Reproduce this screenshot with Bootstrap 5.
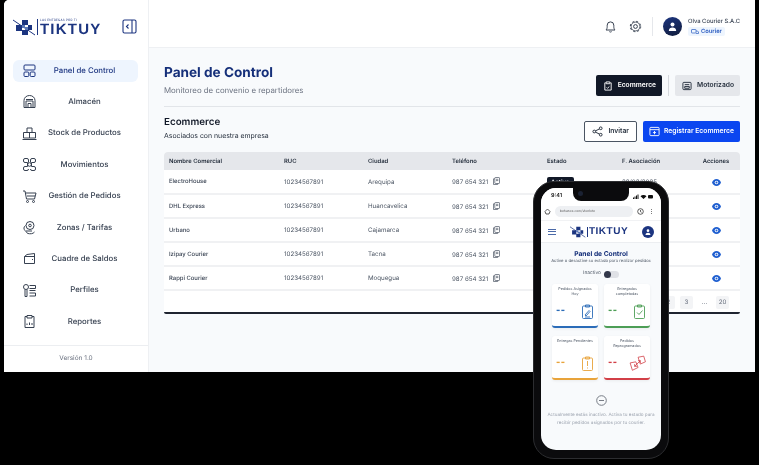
<!DOCTYPE html>
<html lang="es">
<head>
    <meta charset="UTF-8">
    <meta name="viewport" content="width=device-width, initial-scale=1.0">
    <title>Panel de Control</title>
    <link href="https://cdn.jsdelivr.net/npm/bootstrap@5.3.0/dist/css/bootstrap.min.css" rel="stylesheet">
    <style>
        html, body { height: 100%; }
        body { background: #000; font-family: Inter, "Liberation Sans", sans-serif; overflow: hidden; position: relative; text-rendering: geometricPrecision; }

        /* app window */
        .app-frame { margin-left: 4px; width: 751px; height: 372px; background: #f8fafc; overflow: hidden; border-top-left-radius: 5px; will-change: transform; }
        .side-bar { width: 145px; flex: none; background: #fff; border-right: 1px solid #eef0f3; }
        .side-head { height: 48px; padding: 19px 0 0 9px; }
        .logo-mark { width: 23px; height: 17px; flex: none; }
        .logo-sep { width: 1px; height: 16px; background: #1c3580; margin: 0 2px 0 1px; }
        .logo-small { font-size: 3px; line-height: 3px; color: #1c3580; letter-spacing: .2px; }
        .logo-word { font-size: 15px; line-height: 16px; font-weight: 700; color: #1c3580; letter-spacing: 1.2px; font-family: "Liberation Sans", sans-serif; }
        .collapse-ico { width: 15px; height: 15px; margin-left: auto; margin-right: 11px; color: #1c3580; flex: none; }
        .side-nav { margin: 11.5px 10px 0 9px; gap: 9.4px; flex: 1; }
        .side-link { height: 22px; border-radius: 6px; color: #374151; font-size: 7.8px; font-weight: 500; padding-left: 9px; white-space: nowrap; }
        .side-link.is-on { background: #eef5fe; color: #1c3580; }
        .side-link svg { width: 15px; height: 15px; flex: none; fill: none; stroke: currentColor; stroke-width: 1; }
        .side-link span { flex: 1; text-align: center; padding-right: 6px; }
        .side-foot { height: 27px; border-top: 1px solid #eceef1; font-size: 6.5px; color: #6b7280; }

        .top-bar { height: 48px; background: #fff; border-bottom: 1px solid #eef0f3; padding: 6px 15px 0 0; }
        .top-ico { width: 13px; height: 13px; fill: none; stroke: #374151; stroke-width: 1; }
        .top-sep { width: 1px; height: 19px; background: #e5e7eb; margin: 0 10px; }
        .user-pic { width: 19px; height: 19px; background: linear-gradient(160deg, #1c3580, #111c3a); }
        .user-info { margin-left: 6px; }
        .user-name { font-size: 5.85px; line-height: 9px; color: #374151; font-weight: 500; white-space: nowrap; }
        .user-tag { width: fit-content; gap: 2px; font-size: 5.8px; line-height: 9px; font-weight: 600; background: #eef5fe; color: #2a5bc0; padding: 0 3px; border-radius: 2px; margin-top: 1px; }

        /* content */
        .page-body { padding: 16px 15px 0 15px; min-width: 0; }
        .page-title { font-size: 13.6px; line-height: 18px; font-weight: 700; color: #16307a; margin: 0; }
        .page-sub { font-size: 7.85px; line-height: 12px; color: #6b7280; margin: 2px 0 0; }
        .head-actions { margin-top: 11px; }
        .head-btn { height: 21px; gap: 5px; font-size: 6.7px; font-weight: 600; border-radius: 2px; padding: 0 6px 0 7px; border: 0; white-space: nowrap; }
        .head-btn svg { width: 10px; height: 10px; fill: none; stroke: currentColor; stroke-width: 1; }
        .btn-dark-ink { background: #111827; color: #fff; }
        .btn-soft { background: #e5e7eb; color: #1f2937; }
        .head-sep { width: 1px; height: 21px; background: #d5d8dd; margin: 0 6px; }
        .page-rule { border-top: 1px solid #e2e5e9; margin: 10px 0 9px; }
        .section-title { font-size: 9.8px; line-height: 14px; font-weight: 600; color: #111827; margin: 0; }
        .section-sub { font-size: 6.9px; line-height: 10px; color: #1f2937; margin: 1px 0 0; }
        .act-row { margin-top: 5px; gap: 6px; }
        .act-btn { height: 21px; gap: 5px; font-size: 6.75px; font-weight: 600; border-radius: 2px; padding: 0 7px; white-space: nowrap; }
        .act-btn svg { width: 11px; height: 11px; fill: none; stroke: currentColor; stroke-width: 1; }
        .btn-line { background: #fff; border: 1px solid #4b5563; color: #1f2937; }
        .btn-azure { background: #0b46f0; border: 0; color: #fff; gap: 4px; padding: 0 6px; }

        .grid-box { margin-top: 10px; background: #fff; border-radius: 4px 4px 2px 2px; border-bottom: 2px solid #1f2430; overflow: hidden; height: 162px; }
        .grid-table { table-layout: fixed; margin: 0; font-size: 6.2px; color: #4b5563; }
        .grid-table th { background: #e5e7eb; color: #1f2937; font-size: 5.9px; font-weight: 600; height: 18px; padding: 2px 5px 0; vertical-align: middle; border: 0; }
        .grid-table td { height: 24px; padding: 2px 5px 0; vertical-align: middle; border-bottom: 2px solid #f0f1f3; color: #4b5563; }
        .grid-table td:first-child { color: #374151; font-size: 5.9px; font-weight: 500; }
        .w-a { width: 115px; } .w-b { width: 84px; } .w-c { width: 95px; } .w-d { width: 75px; } .w-e { width: 48px; }
        .copy-ico { width: 7px; height: 8px; fill: none; stroke: #4b5563; stroke-width: .7; margin-left: 3px; vertical-align: -1px; }
        .eye-ico { width: 9px; height: 7px; }
        .state-pill { background: #111827; color: #fff; font-size: 6px; font-weight: 600; padding: 2px 4px; border-radius: 2px; }
        .pager-row { height: 23px; padding-right: 11px; gap: 5px; font-size: 6.2px; color: #6b7280; }
        .pager-cell { min-width: 13px; height: 13px; background: #f3f4f6; border-radius: 2px; }
        .pager-gap { background: transparent; }

        /* phone lies over the window */
        .phone { position: absolute; left: 533px; top: 181px; width: 136px; height: 278px; background: #0b0b0d; border: 1px solid #2c2d30; border-radius: 21px; padding: 6px 7px 8px; will-change: transform; }
        .phone-screen { height: 100%; background: #f8fafc; border-radius: 15px; overflow: hidden; position: relative; }
        .notch { position: absolute; left: 32px; top: 0; width: 56px; height: 13px; background: #0b0b0d; border-radius: 0 0 8px 8px; }
        .notch i { position: absolute; left: 5px; top: 3px; width: 5px; height: 5px; border-radius: 50%; background: #1b2233; }
        .phone-top { background: #fff; }
        .status-row { height: 14px; padding: 5px 8px 0 10px; font-size: 5.5px; line-height: 7px; font-weight: 600; color: #111; }
        .status-row svg { width: 20px; height: 5px; margin-top: 1px; }
        .url-row { height: 18px; padding: 0 6px 0 3px; gap: 4px; }
        .url-pill { flex: 1; height: 11px; border-radius: 6px; background: #eef0f3; font-size: 3.3px; color: #555; padding-left: 5px; }
        .url-row svg { width: 7px; height: 7px; fill: none; stroke: #333; stroke-width: .8; flex: none; }
        .app-row { height: 23px; padding: 0 7px; border-top: 1px solid #f1f2f4; border-bottom: 1px solid #eceef1; }
        .burger { width: 8px; height: 6px; border-top: 1px solid #4b6aa8; border-bottom: 1px solid #4b6aa8; position: relative; }
        .burger::after { content: ""; position: absolute; left: 0; right: 0; top: 1.5px; border-top: 1px solid #4b6aa8; }
        .mini-mark { width: 16px; height: 12px; flex: none; }
        .mini-sep { width: 1px; height: 10px; background: #1c3580; margin: 0 1px; }
        .mini-word { font-size: 10px; line-height: 11px; font-weight: 700; color: #1c3580; letter-spacing: .5px; font-family: "Liberation Sans", sans-serif; }
        .mini-pic { width: 12px; height: 12px; background: #1c3580; }
        .m-title { font-size: 6.7px; line-height: 8px; font-weight: 700; color: #16307a; margin: 7px 0 0; }
        .m-sub { font-size: 4.2px; line-height: 6px; color: #4b5563; margin: 1px 0 0; }
        .m-toggle-row { gap: 3px; font-size: 4.8px; color: #4b5563; margin-top: 5px; height: 8px; }
        .m-toggle { width: 15px; height: 7px; background: #dfe1e6; border-radius: 4px; position: relative; }
        .m-toggle::before { content: ""; position: absolute; left: 0; top: 0; width: 7px; height: 7px; border-radius: 50%; background: #33384a; }
        .m-grid { display: grid; grid-template-columns: 46px 46px; gap: 8px 6px; justify-content: center; margin-top: 6px; }
        .m-card { height: 44px; background: #fff; border-radius: 3px; border-bottom: 2px solid; box-shadow: 0 1px 3px rgba(0,0,0,.06); padding: 3px 4px 0; font-size: 3.7px; line-height: 4.6px; text-align: center; }
        .m-label { height: 10px; color: #4b5563; }
        .m-val { font-size: 9px; line-height: 8px; font-weight: 900; letter-spacing: .4px; }
        .m-card svg { width: 13px; height: 15px; fill: none; stroke: currentColor; stroke-width: .9; }
        .m-card svg.ico-swap { width: 17px; height: 17px; stroke-width: .7; }
        .m-body { height: 24px; margin-top: 2px; }
        .tone-blue { border-color: #2b6cb8; color: #2b6cb8; }
        .tone-green { border-color: #4d9e56; color: #4d9e56; }
        .tone-amber { border-color: #e8a33a; color: #e8a33a; }
        .tone-red { border-color: #d23f47; color: #d23f47; }
        .m-off { width: 11px; height: 11px; margin-top: 14px; fill: none; stroke: #777c85; stroke-width: 1; }
        .m-note { font-size: 4.6px; line-height: 8px; color: #9ca3af; margin: 6px 4px 0; }
    </style>
</head>
<body>
    <svg width="0" height="0" class="position-absolute">
        <symbol id="copy" viewBox="0 0 7 8"><rect x="1.8" y=".5" width="4.7" height="6" rx=".6"/><path d="M1.8 1.8H.5v5.7h4.2V6.5M3 2.3h2.3M3 3.6h2.3"/></symbol>
        <symbol id="eye" viewBox="0 0 9 7"><path fill="#1f5fd0" d="M4.5 0C2.4 0 .8 1.4 0 3.5 .8 5.6 2.4 7 4.5 7S8.2 5.6 9 3.5C8.2 1.4 6.6 0 4.5 0z"/><circle cx="4.5" cy="3.5" r="1.8" fill="#fff"/><circle cx="4.5" cy="3.5" r="1" fill="#1f5fd0"/></symbol>
        <symbol id="mark" viewBox="0 0 23 17">
            <path d="M0 1l22 15" stroke="#1c3580" stroke-width="1" fill="none"/>
            <path fill="#1c3580" d="M3 6h6v6H3zM9 1h6v5H9zM15 6h4v5h-4zM9 11h6v5H9z"/>
            <path fill="#5b78b8" d="M9 6h3v3H9zM12 8h3v3h-3z"/>
        </symbol>
    </svg>

    <div class="app-frame d-flex">
        <aside class="side-bar d-flex flex-column">
            <div class="side-head d-flex align-items-start">
                <svg class="logo-mark"><use href="#mark"/></svg>
                <div class="logo-sep"></div>
                <div>
                    <div class="logo-small">LAS ENTREGAS POR TI</div>
                    <div class="logo-word">TIKTUY</div>
                </div>
                <svg class="collapse-ico" viewBox="0 0 15 15" fill="none" stroke="currentColor" stroke-width="1.1"><rect x="1" y="1" width="13" height="13" rx="1.5"/><path d="M10 1v13M6.5 5.5l-2 2 2 2"/></svg>
            </div>
            <nav class="side-nav d-flex flex-column">
                <a class="side-link is-on d-flex align-items-center text-decoration-none" href="#">
                    <svg viewBox="0 0 15 15" stroke-width="1.2"><rect x="2" y="2" width="11" height="5" rx="1"/><rect x="2" y="9" width="4.8" height="4.5" rx="1"/><rect x="8.2" y="9" width="4.8" height="4.5" rx="1"/></svg>
                    <span>Panel de Control</span>
                </a>
                <a class="side-link d-flex align-items-center text-decoration-none" href="#">
                    <svg viewBox="0 0 15 15"><path d="M2 13.5V6.5C2 3.5 4.5 1.5 7.500 1.500S13 3.500 13 6.500v7zM4 13.500V7h7v6.500M4 5.500h7M6 9.500h3v4H6z"/></svg>
                    <span>Almacén</span>
                </a>
                <a class="side-link d-flex align-items-center text-decoration-none" href="#">
                    <svg viewBox="0 0 15 15"><path d="M5 2h5v4.500H5zM1.500 6.500h6V12h-6zM7.500 6.500h6V12h-6zM.5 13.500h14"/></svg>
                    <span>Stock de Productos</span>
                </a>
                <a class="side-link d-flex align-items-center text-decoration-none" href="#">
                    <svg viewBox="0 0 15 15"><path d="M5.500 5.500H3A1.500 1.500 0 0 1 1.500 4V3A1.500 1.500 0 0 1 3 1.500h2A1.500 1.500 0 0 1 6.500 3M9.500 5.500H12A1.500 1.500 0 0 0 13.500 4V3A1.500 1.500 0 0 0 12 1.500h-2A1.500 1.500 0 0 0 8.500 3M5.500 9.500H3A1.500 1.500 0 0 0 1.500 11v1A1.500 1.500 0 0 0 3 13.500h2A1.500 1.500 0 0 0 6.500 12M9.500 9.500H12a1.500 1.500 0 0 1 1.500 1.500v1a1.500 1.500 0 0 1-1.500 1.500h-2A1.500 1.500 0 0 1 8.500 12M5.500 5.500v4M9.500 5.500v4M6.500 3v2.500M8.500 3v2.500"/><circle cx="7.500" cy="7.500" r="1.800"/></svg>
                    <span>Movimientos</span>
                </a>
                <a class="side-link d-flex align-items-center text-decoration-none" href="#">
                    <svg viewBox="0 0 15 15"><path d="M1 2h2l1.500 8h8L14 4H3.500M5 7h8"/><circle cx="5.500" cy="12.500" r="1"/><circle cx="11.500" cy="12.500" r="1"/></svg>
                    <span>Gestión de Pedidos</span>
                </a>
                <a class="side-link d-flex align-items-center text-decoration-none" href="#">
                    <svg viewBox="0 0 15 15"><circle cx="8" cy="5.500" r="4"/><circle cx="8" cy="5.500" r="1.300"/><path d="M3.500 5.500C1.500 7 1.500 9 3 10.500s1 2 3 3c2 .5 5 .5 6.500-1.500M4 11h6"/></svg>
                    <span>Zonas / Tarifas</span>
                </a>
                <a class="side-link d-flex align-items-center text-decoration-none" href="#">
                    <svg viewBox="0 0 15 15"><path d="M2.500 5.500v7h10v-10L5 3.500l-2.500 2h10M10 8.500h1"/></svg>
                    <span>Cuadre de Saldos</span>
                </a>
                <a class="side-link d-flex align-items-center text-decoration-none" href="#">
                    <svg viewBox="0 0 15 15"><circle cx="4" cy="4" r="2.500"/><path d="M3 6.500v7h2V6.500M7.500 2.500h6v3h-6M7.500 7.500h6M7.500 10h6v3h-6"/></svg>
                    <span>Perfiles</span>
                </a>
                <a class="side-link d-flex align-items-center text-decoration-none" href="#">
                    <svg viewBox="0 0 15 15"><path d="M5 2.500H3v11h9v-11h-2M5 1.500h5v2.500H5zM5 11V9.500M7.500 11V8.500M10 11V9"/></svg>
                    <span>Reportes</span>
                </a>
            </nav>
            <div class="side-foot d-flex align-items-center justify-content-center">Versión 1.0</div>
        </aside>

        <main class="flex-grow-1 d-flex flex-column">
            <header class="top-bar d-flex align-items-center justify-content-end">
                <svg class="top-ico me-2" viewBox="0 0 13 13"><path d="M2 10c.8-.9 1.200-1.800 1.200-3.500V5.200a3.300 3.300 0 0 1 6.600 0v1.300c0 1.700.4 2.600 1.200 3.500zM5.300 11.500c.6.700 1.800.7 2.400 0"/></svg>
                <svg class="top-ico ms-1" viewBox="0 0 13 13"><circle cx="6.500" cy="6.500" r="1.900"/><circle cx="6.500" cy="6.500" r="4.400" stroke-width=".8"/><circle cx="6.500" cy="6.500" r="5.200" stroke-width="1" stroke-dasharray="2.100 2"/></svg>
                <div class="top-sep"></div>
                <div class="user-pic rounded-circle d-flex align-items-center justify-content-center">
                    <svg width="9" height="9" viewBox="0 0 9 9" fill="#fff"><circle cx="4.500" cy="2.500" r="2"/><path d="M.8 9c0-2.500 1.600-3.500 3.700-3.500S8.200 6.500 8.200 9z"/></svg>
                </div>
                <div class="user-info">
                    <div class="user-name">Olva Courier S.A.C</div>
                    <div class="user-tag d-flex align-items-center">
                        <svg width="8" height="6" viewBox="0 0 8 6" fill="none" stroke="currentColor" stroke-width=".7"><rect x=".5" y=".5" width="4.500" height="3.500" rx=".5"/><path d="M5 2h1.500l1 1v1.500H5"/></svg>
                        Courier
                    </div>
                </div>
            </header>

            <div class="page-body flex-grow-1">
                <div class="d-flex justify-content-between align-items-start">
                    <div>
                        <h1 class="page-title">Panel de Control</h1>
                        <p class="page-sub">Monitoreo de convenio e repartidores</p>
                    </div>
                    <div class="head-actions d-flex align-items-center">
                        <button class="head-btn btn-dark-ink d-flex align-items-center">
                            <svg viewBox="0 0 11 11"><path d="M3 2H2v8h7V2H8M3.500 1h4v2h-4zM4 7l1 1 2-2"/></svg>
                            Ecommerce
                        </button>
                        <div class="head-sep"></div>
                        <button class="head-btn btn-soft d-flex align-items-center">
                            <svg viewBox="0 0 11 11"><rect x="1" y="1.500" width="9" height="8" rx="1"/><path d="M3 4h5M3 6h5v2H3z"/></svg>
                            Motorizado
                        </button>
                    </div>
                </div>
                <div class="page-rule"></div>
                <div class="d-flex justify-content-between align-items-start">
                    <div>
                        <h2 class="section-title">Ecommerce</h2>
                        <p class="section-sub">Asociados con nuestra empresa</p>
                    </div>
                    <div class="act-row d-flex">
                        <button class="act-btn btn-line d-flex align-items-center">
                            <svg viewBox="0 0 12 12"><circle cx="2.500" cy="6" r="1.500"/><circle cx="9.500" cy="2.500" r="1.500"/><circle cx="9.500" cy="9.500" r="1.500"/><path d="M3.800 5.300l4.400-2.100M3.800 6.700l4.400 2.100"/></svg>
                            Invitar
                        </button>
                        <button class="act-btn btn-azure d-flex align-items-center">
                            <svg viewBox="0 0 12 12"><rect x="1" y="1.500" width="10" height="9" rx="1"/><path d="M1 4h10M6 5.500v3.500M4.300 7.200h3.400"/></svg>
                            Registrar Ecommerce
                        </button>
                    </div>
                </div>

                <div class="grid-box">
                    <table class="table grid-table">
                        <thead>
                            <tr>
                                <th class="w-a">Nombre Comercial</th>
                                <th class="w-b">RUC</th>
                                <th class="w-b">Ciudad</th>
                                <th class="w-c">Teléfono</th>
                                <th class="w-d">Estado</th>
                                <th class="w-d">F. Asociación</th>
                                <th class="w-e text-center">Acciones</th>
                            </tr>
                        </thead>
                        <tbody>
                            <tr><td>ElectroHouse</td><td>10234567891</td><td>Arequipa</td><td>987 654 321 <svg class="copy-ico"><use href="#copy"/></svg></td><td><span class="state-pill">Activo</span></td><td>28/03/2025</td><td class="text-center"><svg class="eye-ico"><use href="#eye"/></svg></td></tr>
                            <tr><td>DHL Express</td><td>10234567891</td><td>Huancavelica</td><td>987 654 321 <svg class="copy-ico"><use href="#copy"/></svg></td><td></td><td></td><td class="text-center"><svg class="eye-ico"><use href="#eye"/></svg></td></tr>
                            <tr><td>Urbano</td><td>10234567891</td><td>Cajamarca</td><td>987 654 321 <svg class="copy-ico"><use href="#copy"/></svg></td><td></td><td></td><td class="text-center"><svg class="eye-ico"><use href="#eye"/></svg></td></tr>
                            <tr><td>Izipay Courier</td><td>10234567891</td><td>Tacna</td><td>987 654 321 <svg class="copy-ico"><use href="#copy"/></svg></td><td></td><td></td><td class="text-center"><svg class="eye-ico"><use href="#eye"/></svg></td></tr>
                            <tr><td>Rappi Courier</td><td>10234567891</td><td>Moquegua</td><td>987 654 321 <svg class="copy-ico"><use href="#copy"/></svg></td><td></td><td></td><td class="text-center"><svg class="eye-ico"><use href="#eye"/></svg></td></tr>
                        </tbody>
                    </table>
                    <div class="pager-row d-flex align-items-center justify-content-end">
                        <div class="pager-cell d-flex align-items-center justify-content-center">2</div>
                        <div class="pager-cell d-flex align-items-center justify-content-center">3</div>
                        <div class="pager-cell pager-gap d-flex align-items-center justify-content-center">...</div>
                        <div class="pager-cell d-flex align-items-center justify-content-center">20</div>
                    </div>
                </div>
            </div>
        </main>
    </div>

    <div class="phone">
        <div class="phone-screen">
            <div class="notch"><i></i></div>
            <div class="phone-top">
                <div class="status-row d-flex justify-content-between align-items-start">
                    <span>9:41</span>
                    <svg viewBox="0 0 20 5" fill="#111"><path d="M0 3.500h1V5H0zM1.500 2.500h1V5h-1zM3 1.500h1V5H3zM4.500 .5h1V5h-1z"/><path d="M10.500 1a4 4 0 0 0-3 1.300l3 2.700 3-2.700a4 4 0 0 0-3-1.300z"/><rect x="15" y="1" width="5" height="3.500" rx="1"/></svg>
                </div>
                <div class="url-row d-flex align-items-center">
                    <svg viewBox="0 0 7 7"><path d="M1 3.500L3.500 1 6 3.500 5 6H2z"/></svg>
                    <div class="url-pill d-flex align-items-center">behance.com/sherlote</div>
                    <svg viewBox="0 0 7 7"><circle cx="3.500" cy="3.500" r="2.800"/><path d="M3.500 2v1.700l1 .6"/></svg>
                    <svg viewBox="0 0 7 7"><path d="M3.500 1v.8M3.500 3.100v.8M3.500 5.200V6"/></svg>
                </div>
                <div class="app-row d-flex align-items-center justify-content-between">
                    <div class="burger"></div>
                    <div class="d-flex align-items-center">
                        <svg class="mini-mark"><use href="#mark"/></svg>
                        <div class="mini-sep"></div>
                        <div class="mini-word">TIKTUY</div>
                    </div>
                    <div class="mini-pic rounded-circle d-flex align-items-center justify-content-center">
                        <svg width="6" height="6" viewBox="0 0 9 9" fill="#fff"><circle cx="4.500" cy="2.500" r="2"/><path d="M.8 9c0-2.500 1.600-3.500 3.700-3.500S8.200 6.500 8.200 9z"/></svg>
                    </div>
                </div>
            </div>
            <div class="text-center">
                <p class="m-title">Panel de Control</p>
                <p class="m-sub">Active o desactive su estado para realizar pedidos</p>
                <div class="m-toggle-row d-flex align-items-center justify-content-center">Inactivo <div class="m-toggle"></div></div>
            </div>
            <div class="m-grid">
                <div class="m-card tone-blue">
                    <div class="m-label">Pedidos Asignados Hoy</div>
                    <div class="m-body d-flex justify-content-between align-items-center"><span class="m-val">--</span><svg viewBox="0 0 13 15"><rect x="1.500" y="2" width="10" height="12.500" rx="1"/><path d="M4.500 1h4v2h-4zM4 11l4-4.500 1 1L5 12zM4 13h5"/></svg></div>
                </div>
                <div class="m-card tone-green">
                    <div class="m-label">Entregadas completadas</div>
                    <div class="m-body d-flex justify-content-between align-items-center"><span class="m-val">--</span><svg viewBox="0 0 13 15"><rect x="1.500" y="2" width="10" height="12.500" rx="1"/><path d="M4.500 1h4v2h-4zM4 8.500l2 2 3.500-4"/></svg></div>
                </div>
                <div class="m-card tone-amber">
                    <div class="m-label">Entregas Pendientes</div>
                    <div class="m-body d-flex justify-content-between align-items-center"><span class="m-val">--</span><svg viewBox="0 0 13 15"><rect x="1.500" y="2" width="10" height="12.500" rx="1"/><path d="M4.500 1h4v2h-4zM6.500 5v5M6.500 11.500v1"/></svg></div>
                </div>
                <div class="m-card tone-red">
                    <div class="m-label">Pedidos Reprogramados</div>
                    <div class="m-body d-flex justify-content-between align-items-center"><span class="m-val">--</span><svg class="ico-swap" viewBox="0 0 15 15"><path d="M1 7l5-1 2 5-5 2.500zM8 2l5-1 1.500 5L10 8zM5 10l5-5M8 5h2v2M5 8v2h2"/></svg></div>
                </div>
            </div>
            <div class="text-center">
                <svg class="m-off" viewBox="0 0 11 11"><circle cx="5.500" cy="5.500" r="4.800"/><path d="M3 5.500h5"/></svg>
                <p class="m-note">Actualmente estás inactivo. Activa tu estado para recibir pedidos asignados por tu courier.</p>
            </div>
        </div>
    </div>
</body>
</html>
